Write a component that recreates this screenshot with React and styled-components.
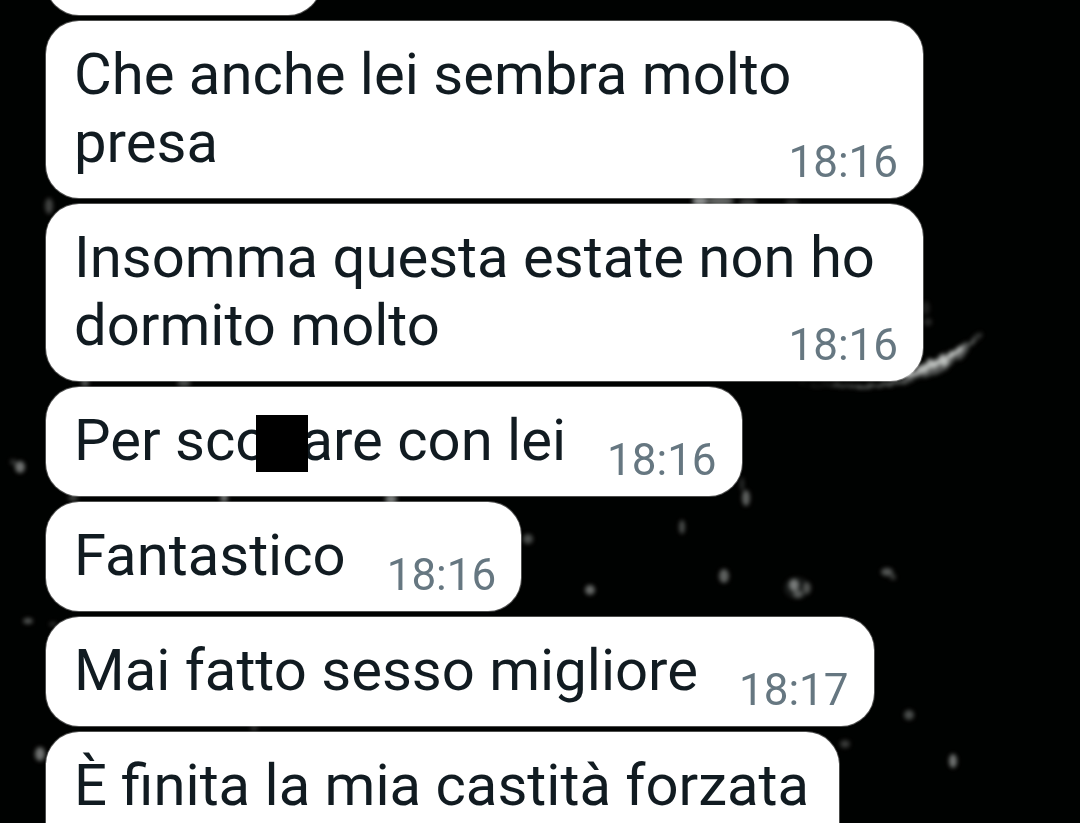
import React from 'react';
import styled, { createGlobalStyle } from 'styled-components';

const GlobalStyle = createGlobalStyle`
  * {
    box-sizing: border-box;
  }

  body {
    margin: 0;
    background: #000201;
    font-family: Roboto, 'Noto Sans', sans-serif;
  }
`;

const Page = styled.main`
  position: relative;
  height: 100vh;
  overflow: hidden;
`;

const Wallpaper = styled.svg`
  position: absolute;
  inset: 0;
  width: 100%;
  height: 100%;
`;

const Thread = styled.ol`
  position: relative;
  display: flex;
  flex-direction: column;
  align-items: flex-start;
  gap: 6px;
  margin: 0;
  padding: 0 157px 0 46px;
  list-style: none;
`;

const Bubble = styled.li`
  display: flow-root;
  padding: 19px ${({ $stacked }) => ($stacked ? 30 : 25)}px 10px 28px;
  border-radius: 33px;
  background: #fff;
  box-shadow: 0 0 0 1px rgba(255, 255, 255, 0.3);
  color: #111b21;
  font-size: 58px;
  line-height: 68px;
`;

// only the lower edge of the previous message is scrolled into view
const ScrolledOut = styled.li`
  display: flex;
  align-items: flex-end;
  height: 15px;
`;

const ScrolledBubble = styled.div`
  flex: none;
  width: 275px;
  height: 109px;
  border-radius: 33px;
  background: #fff;
  box-shadow: 0 0 0 1px rgba(255, 255, 255, 0.3);
`;

// floats beside the last line, a little below its baseline
const Time = styled.time`
  display: block;
  float: ${({ $stacked }) => ($stacked ? 'none' : 'right')};
  margin: ${({ $stacked }) => ($stacked ? '0' : '28px 0 0 41px')};
  color: #667781;
  font-size: 44px;
  line-height: 52px;
  text-align: right;
`;

const Redacted = styled.span`
  position: relative;
  display: inline-block;
  width: 33px;
  height: 1px;

  &::after {
    content: '';
    position: absolute;
    bottom: -12px;
    left: -12px;
    width: 52px;
    height: 57px;
    background: #000;
  }
`;

const messages = [
  { text: 'Che anche lei sembra molto presa', time: '18:16' },
  { text: 'Insomma questa estate non ho dormito molto', time: '18:16' },
  {
    text: (
      <>
        Per sco
        <Redacted />
        are con lei
      </>
    ),
    time: '18:16',
  },
  { text: 'Fantastico', time: '18:16' },
  { text: 'Mai fatto sesso migliore', time: '18:17' },
  { text: 'È finita la mia castità forzata', time: '18:17', stacked: true },
];

// x, y, rx, ry, opacity
const specks = [
  [49, 206, 4, 8, 0.35],
  [20, 467, 5, 6, 0.6],
  [13, 462, 3, 3, 0.25],
  [28, 621, 5, 3, 0.45],
  [53, 624, 4, 2, 0.25],
  [40, 754, 5, 7, 0.6],
  [85, 383, 4, 3, 0.5],
  [184, 383, 7, 3, 0.45],
  [73, 498, 5, 3, 0.35],
  [224, 498, 4, 4, 0.6],
  [391, 499, 6, 4, 0.7],
  [254, 728, 4, 2, 0.3],
  [528, 539, 5, 5, 0.4],
  [590, 590, 5, 5, 0.55],
  [682, 527, 3, 7, 0.4],
  [746, 498, 4, 8, 0.5],
  [742, 484, 2, 7, 0.25],
  [724, 576, 5, 7, 0.5],
  [794, 585, 5, 6, 0.6],
  [798, 594, 5, 4, 0.4],
  [807, 588, 4, 6, 0.35],
  [797, 588, 13, 11, 0.12],
  [887, 572, 6, 4, 0.45],
  [893, 577, 3, 3, 0.3],
  [909, 715, 5, 5, 0.4],
  [845, 744, 5, 4, 0.3],
  [953, 761, 4, 7, 0.6],
  [700, 201, 8, 4, 0.8],
  [720, 201, 14, 4, 0.55],
  [748, 202, 9, 3, 0.35],
  [792, 202, 7, 2, 0.3],
  [926, 308, 4, 7, 0.15],
  [928, 322, 4, 4, 0.2],
];

const Sky = () => (
  <Wallpaper viewBox="0 0 1080 823" preserveAspectRatio="xMidYMid slice" aria-hidden="true">
    <defs>
      <filter id="soft" x="-50%" y="-50%" width="200%" height="200%">
        <feGaussianBlur stdDeviation="2" />
      </filter>
      <filter id="dust" x="-20%" y="-50%" width="140%" height="200%">
        <feTurbulence type="fractalNoise" baseFrequency="0.12" numOctaves="2" seed="4" />
        <feDisplacementMap in="SourceGraphic" scale="8" />
        <feGaussianBlur stdDeviation="2" />
      </filter>
    </defs>
    <g fill="#b9bdbb" filter="url(#soft)">
      {specks.map(([x, y, rx, ry, opacity]) => (
        <ellipse key={`${x}-${y}`} cx={x} cy={y} rx={rx} ry={ry} opacity={opacity} />
      ))}
    </g>
    <g filter="url(#dust)">
      <path d="M796 383 Q880 392 922 370 Q952 354 982 332 Q964 362 932 375 Q880 396 796 383Z" fill="#777b79" opacity="0.7" />
      <path d="M900 376 Q938 356 966 346 Q952 364 912 376Z" fill="#d0d3d1" opacity="0.85" />
    </g>
  </Wallpaper>
);

const App = () => (
  <>
    <GlobalStyle />
    <Page>
      <Sky />
      <Thread>
        <ScrolledOut>
          <ScrolledBubble />
        </ScrolledOut>
        {messages.map(({ text, time, stacked }, index) => (
          <Bubble key={index} $stacked={stacked}>
            {text}
            <Time $stacked={stacked}>{time}</Time>
          </Bubble>
        ))}
      </Thread>
    </Page>
  </>
);

export default App;
